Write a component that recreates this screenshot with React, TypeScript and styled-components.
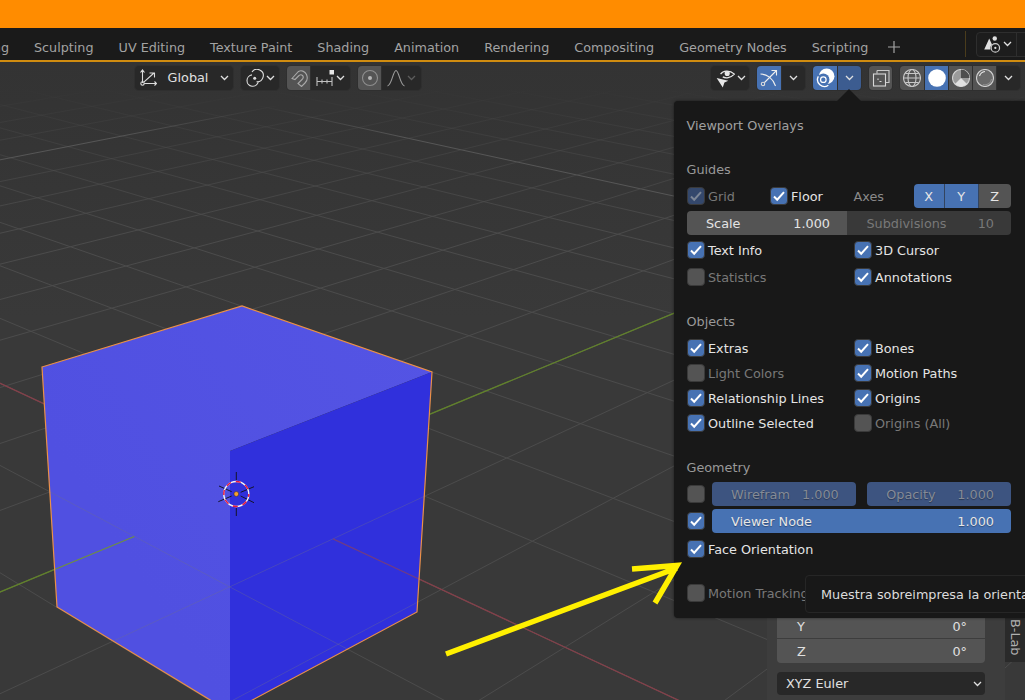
import styled, { createGlobalStyle } from 'styled-components'

const GlobalStyle = createGlobalStyle`
  html, body { margin: 0; padding: 0; background: #393939; }
  body { font-family: "DejaVu Sans", "Liberation Sans", sans-serif; font-size: 12.8px; }
`

const Page = styled.div`
  width: 1025px;
  height: 700px;
  overflow: hidden;
  display: flex;
  flex-direction: column;
`

const OrangeBar = styled.div`
  height: 28px;
  flex: none;
  background: #ff8c00;
`

const TopBar = styled.div`
  height: 32px;
  flex: none;
  display: flex;
  align-items: center;
  background: #1a1a1a;
  border-bottom: 2px solid #d08c10;
  position: relative;
`

const Tabs = styled.div`
  display: flex;
  align-items: center;
  gap: 25px;
  margin-left: -49px;
  white-space: nowrap;
  padding-top: 6px;
`

const Tab = styled.span`
  color: #a3a3a3;
  font-size: 12.75px;
`

const PlusSign = styled.svg`
  width: 12px;
  height: 12px;
  margin-left: -5px;
  color: #a3a3a3;
`

const ScreenSep = styled.div`
  width: 1px;
  height: 26px;
  margin-left: auto;
  background: #4a3c1c;
`

const SceneButton = styled.div`
  width: 60px;
  height: 25px;
  box-sizing: border-box;
  margin: 0 -11px 0 10px;
  display: flex;
  align-items: center;
  background: #1d1d1d;
  border: 1px solid #2e2e2e;
  border-radius: 4px;
  color: #d0d0d0;
`

const SceneLeft = styled.div`
  width: 39px;
  height: 100%;
  display: flex;
  align-items: center;
  justify-content: center;
  gap: 1px;
  border-right: 1px solid #2e2e2e;
`

const Viewport = styled.div`
  flex: 1;
  position: relative;
  background: linear-gradient(#333333 0, #393939 40%);
`

const SceneSvg = styled.svg`
  position: absolute;
  inset: 0;
  display: block;
`

const ArrowSvg = styled(SceneSvg)`
  pointer-events: none;
`

const ToolHeader = styled.div`
  position: absolute;
  top: 4px;
  left: 0;
  right: 0;
  height: 24px;
  display: flex;
  padding: 0 5px 0 135px;
  box-sizing: border-box;
`

const ToolGroup = styled.div<{ $right?: boolean }>`
  display: flex;
  gap: 8px;
  margin-left: ${p => (p.$right ? 'auto' : '0')};
`

const ButtonSet = styled.div`
  display: flex;
  border-radius: 4px;
  overflow: hidden;
  box-shadow: 0 0 0 1px #2f2f2f;
`

const ToolButton = styled.div<{ $w: number; $tone?: 'dark' | 'grey' | 'blue' | 'deep' }>`
  width: ${p => p.$w}px;
  height: 24px;
  box-sizing: border-box;
  display: flex;
  align-items: center;
  justify-content: center;
  gap: 2px;
  color: #dcdcdc;
  background: ${p =>
    p.$tone === 'grey' ? '#545454' : p.$tone === 'blue' ? '#4772b3' : p.$tone === 'deep' ? '#3c5c90' : '#282828'};
  & + & {
    border-left: 1px solid #303030;
  }
`

const GlobalLabel = styled.span`
  color: #e0e0e0;
  margin: 0 10px 0 9px;
  padding-bottom: 2px;
`

const Popover = styled.div`
  position: absolute;
  left: 674px;
  top: 39px;
  right: 0;
  height: 517px;
  box-sizing: border-box;
  padding: 13px 14px 0 12.5px;
  background: #181818;
  border-radius: 4px 0 0 4px;
  box-shadow: 0 0 3px rgba(0, 0, 0, 0.5);
  &::before {
    content: '';
    position: absolute;
    left: 163px;
    top: -12px;
    border-left: 12.5px solid transparent;
    border-right: 12.5px solid transparent;
    border-bottom: 12.5px solid #181818;
  }
`

const PopTitle = styled.div`
  height: 24px;
  line-height: 24px;
  color: #a0a0a0;
  margin-bottom: 20px;
`

const Heading = styled.div<{ $gap?: number; $after: number }>`
  height: 24px;
  line-height: 24px;
  color: #999999;
  margin-top: ${p => p.$gap ?? 0}px;
  margin-bottom: ${p => p.$after}px;
`

const FloorRow = styled.div`
  display: grid;
  grid-template-columns: 83px 84px 60px 1fr;
  height: 24px;
  align-items: center;
  margin-bottom: 3px;
`

const TwoCols = styled.div<{ $rowH: number }>`
  display: grid;
  grid-template-columns: 167px 1fr;
  grid-auto-rows: ${p => p.$rowH}px;
  row-gap: 3px;
  align-items: center;
`

const Item = styled.div<{ $dim?: boolean }>`
  display: flex;
  align-items: center;
  gap: 3.5px;
  white-space: nowrap;
  color: ${p => (p.$dim ? '#787878' : '#e4e4e4')};
`

const Box = styled.div<{ $on?: boolean; $dim?: boolean }>`
  width: 18px;
  height: 18px;
  flex: none;
  box-sizing: border-box;
  border-radius: 4px;
  border: 1px solid #3a3a3a;
  background: ${p => (p.$on ? (p.$dim ? '#34486c' : '#4772b3') : '#545454')};
  color: ${p => (p.$dim ? '#7d8797' : '#ffffff')};
  display: flex;
  align-items: center;
  justify-content: center;
`

const AxesLabel = styled.span`
  color: #8a8a8a;
`

const AxisSet = styled.div`
  display: flex;
  height: 24px;
  border-radius: 4px;
  overflow: hidden;
`

const AxisButton = styled.div<{ $on?: boolean; $w: number }>`
  width: ${p => p.$w}px;
  display: flex;
  align-items: center;
  justify-content: center;
  color: #e6e6e6;
  background: ${p => (p.$on ? '#4772b3' : '#545454')};
  & + & {
    border-left: 1px solid #33445f;
  }
`

const SplitField = styled.div`
  display: grid;
  grid-template-columns: 160.5px 1fr;
  height: 24px;
  border-radius: 4px;
  overflow: hidden;
  margin-bottom: 3px;
`

const FieldPart = styled.div<{ $off?: boolean }>`
  display: flex;
  justify-content: space-between;
  align-items: center;
  padding: 0 17px 0 19.5px;
  color: ${p => (p.$off ? '#787878' : '#e4e4e4')};
  background: ${p => (p.$off ? '#393939' : '#545454')};
`

const GeoRow = styled.div`
  display: flex;
  align-items: center;
  gap: 7px;
  height: 25px;
  margin-bottom: 2px;
`

const SliderPair = styled.div`
  flex: 1;
  display: flex;
  gap: 11px;
`

const Slider = styled.div<{ $off?: boolean }>`
  flex: 1;
  height: 24px;
  box-sizing: border-box;
  display: flex;
  justify-content: space-between;
  align-items: center;
  padding: 1px 17px 0 19.5px;
  border-radius: 4px;
  white-space: nowrap;
  color: ${p => (p.$off ? '#858b96' : '#e6e6e6')};
  background: ${p => (p.$off ? '#3d5480' : '#4772b3')};
  text-shadow: 0 1px 1px rgba(0, 0, 0, 0.35);
`

const SingleRow = styled.div<{ $gap?: number }>`
  height: 24px;
  display: flex;
  align-items: center;
  margin-top: ${p => p.$gap ?? 0}px;
`

const Tooltip = styled.div`
  position: absolute;
  left: 805px;
  top: 513px;
  right: -10px;
  height: 38px;
  box-sizing: border-box;
  padding-left: 15px;
  display: flex;
  align-items: center;
  white-space: nowrap;
  color: #dcdcdc;
  background: #181818;
  border: 1px solid #262626;
  border-radius: 4px;
`

const SidePanel = styled.div`
  position: absolute;
  left: 767px;
  width: 238px;
  bottom: 0;
  top: 500px;
  box-sizing: border-box;
  padding: 0 20px 5px 10px;
  display: flex;
  flex-direction: column;
  justify-content: flex-end;
  background: #3d3d3d;
`

const VectorRow = styled.div<{ $last?: boolean }>`
  height: 24px;
  flex: none;
  display: flex;
  justify-content: space-between;
  align-items: center;
  padding: 0 18px 0 20px;
  color: #e0e0e0;
  background: #545454;
  margin-bottom: ${p => (p.$last ? '9px' : '1px')};
  border-radius: ${p => (p.$last ? '0 0 4px 4px' : '0')};
`

const EulerSelect = styled.div`
  height: 23px;
  flex: none;
  display: flex;
  justify-content: space-between;
  align-items: center;
  padding: 0 3px 0 9px;
  color: #e0e0e0;
  background: #282828;
  border-radius: 4px;
`

const SideTab = styled.div`
  position: absolute;
  left: 1005px;
  right: 0;
  bottom: 38px;
  height: 130px;
  box-sizing: border-box;
  padding-bottom: 7px;
  display: flex;
  justify-content: center;
  align-items: flex-end;
  background: #2a2a2a;
`

const SideTabText = styled.span`
  writing-mode: vertical-rl;
  color: #b0b0b0;
`

// ground plane projection, two vanishing points measured off the picture
const A = -0.0575
const B = -0.0557
const project = (x: number, y: number) => {
  const d = 1 + x * A + y * B
  return [(237 + x * A * -1336 + y * B * 1977) / d, (494 + x * A * -241 + y * B * -226) / d]
}
const xLine = (y: number, from: number) => {
  const to = (0.85 + y * B) / -A
  const p = project(from, y)
  const q = project(to, y)
  return { x1: p[0], y1: p[1], x2: q[0], y2: q[1] }
}
const yLine = (x: number, from: number) => {
  const to = (0.85 + x * A) / -B
  const p = project(x, from)
  const q = project(x, to)
  return { x1: p[0], y1: p[1], x2: q[0], y2: q[1] }
}

const steps: number[] = []
for (let i = -30; i <= 14; i++) steps.push(i)

const Chevron = ({ dim }: { dim?: boolean }) => (
  <svg width="9" height="6" viewBox="0 0 9 6" fill="none" stroke={dim ? '#5c5c5c' : '#e0e0e0'} strokeWidth="1.3">
    <path d="M1 1l3.5 3.5L8 1" />
  </svg>
)

const Check = () => (
  <svg width="16" height="16" viewBox="0 0 16 16" fill="none" stroke="currentColor" strokeWidth="2">
    <path d="M3 8.5l3.2 3.2L13 4.2" />
  </svg>
)

const Icon = ({ children, size = 18 }: { children: React.ReactNode; size?: number }) => (
  <svg width={size} height={size} viewBox="0 0 18 18" fill="none" stroke="currentColor" strokeWidth="1.1">
    {children}
  </svg>
)

const Check2 = ({ label, on, dim }: { label: string; on?: boolean; dim?: boolean }) => (
  <Item $dim={dim}>
    <Box $on={on} $dim={dim}>
      {on && <Check />}
    </Box>
    {label}
  </Item>
)

const Scene = () => (
  <SceneSvg width="1025" height="638" viewBox="0 62 1025 638">
    <defs>
      <linearGradient id="fade" gradientUnits="userSpaceOnUse" x1="0" y1="88" x2="0" y2="240">
        <stop offset="0" stopColor="#4b4b4b" stopOpacity="0" />
        <stop offset="0.3" stopColor="#4b4b4b" stopOpacity="0.4" />
        <stop offset="1" stopColor="#4b4b4b" stopOpacity="1" />
      </linearGradient>
      <linearGradient id="fadeMajor" gradientUnits="userSpaceOnUse" x1="0" y1="105" x2="0" y2="170">
        <stop offset="0" stopColor="#565656" stopOpacity="0" />
        <stop offset="0.5" stopColor="#565656" stopOpacity="1" />
      </linearGradient>
      <linearGradient id="frontFace" gradientUnits="userSpaceOnUse" x1="420" y1="310" x2="100" y2="520">
        <stop offset="0" stopColor="#5454e4" />
        <stop offset="1" stopColor="#5050e1" />
      </linearGradient>
      <clipPath id="cubeClip">
        <polygon points="42,367 242,306 432,372 417,612 230,712 57,607" />
      </clipPath>
    </defs>
    <g strokeWidth="1">
      {steps.map(k => (
        <line key={`x${k}`} {...xLine(k, -70)} stroke={k % 10 === 0 ? 'url(#fadeMajor)' : 'url(#fade)'} />
      ))}
      {steps.map(k => (
        <line key={`y${k}`} {...yLine(k, -70)} stroke={k % 10 === 0 ? 'url(#fadeMajor)' : 'url(#fade)'} />
      ))}
    </g>
    <line {...xLine(0, -20)} stroke="#84404a" strokeWidth="1.3" />
    <line {...yLine(0, -20)} stroke="#61822a" strokeWidth="1.3" />
    <polygon points="42,367 242,306 432,372 230,451 230,712 57,607" fill="url(#frontFace)" />
    <polygon points="230,451 432,372 417,612 230,712" fill="#3030dc" />
    <g clipPath="url(#cubeClip)" strokeWidth="1">
      {steps.filter(k => k >= -1).map(k => (
        <line key={`ox${k}`} {...xLine(k, k >= 1 ? -1 : 1)} stroke="#70708c" strokeOpacity={k === 0 ? 0 : 0.35} />
      ))}
      {steps.filter(k => k >= -1).map(k => (
        <line key={`oy${k}`} {...yLine(k, k >= 1 ? -1 : 1)} stroke="#70708c" strokeOpacity={k === 0 ? 0 : 0.35} />
      ))}
      <line {...xLine(0, 1)} stroke="#8a4060" strokeOpacity="0.7" strokeWidth="1.2" />
      <line {...yLine(0, 1)} stroke="#6f8f40" strokeWidth="1.2" />
    </g>
    <polygon
      points="42,367 242,306 432,372 417,612 230,712 57,607"
      fill="none"
      stroke="#ea9048"
      strokeWidth="1.2"
    />
    <g stroke="#14142a" strokeWidth="1">
      <path d="M236.3 472v8M236.3 508v8M219 486l12.7 5.7M254 486.7l-13.3 5.6M218.3 501.7l13.4-5.7M254 502.7l-13.3-6.7" />
    </g>
    <circle cx="236.3" cy="494" r="12.5" fill="none" stroke="#f4f4f4" strokeWidth="1.4" />
    <circle
      cx="236.3"
      cy="494"
      r="12.5"
      fill="none"
      stroke="#e8183c"
      strokeWidth="1.4"
      strokeDasharray="5 5"
      strokeDashoffset="2"
    />
    <circle cx="236.3" cy="494" r="2.4" fill="#f59f2e" stroke="#2a2a2a" strokeWidth="0.5" />
  </SceneSvg>
)

const App = () => (
  <Page>
    <GlobalStyle />
    <OrangeBar />
    <TopBar>
      <Tabs>
        {[
          'Modeling',
          'Sculpting',
          'UV Editing',
          'Texture Paint',
          'Shading',
          'Animation',
          'Rendering',
          'Compositing',
          'Geometry Nodes',
          'Scripting',
        ].map(t => (
          <Tab key={t}>{t}</Tab>
        ))}
        <PlusSign viewBox="0 0 12 12" fill="none" stroke="currentColor" strokeWidth="1.2">
          <path d="M6 0v12M0 6h12" />
        </PlusSign>
      </Tabs>
      <ScreenSep />
      <SceneButton>
        <SceneLeft>
          <Icon size={20}>
            <path d="M2 14L6.500 4l2.500 5.500A5 5 0 0 0 7.500 14z" fill="#e0e0e0" stroke="none" />
            <circle cx="11.500" cy="4" r="2" fill="#e0e0e0" stroke="none" />
            <circle cx="12" cy="12.500" r="3.800" />
            <circle cx="12" cy="12.500" r="1" fill="#e0e0e0" stroke="none" />
          </Icon>
          <Chevron />
        </SceneLeft>
      </SceneButton>
    </TopBar>
    <Viewport>
      <Scene />
      <ToolHeader>
        <ToolGroup>
          <ButtonSet>
            <ToolButton $w={98}>
              <Icon>
                <path d="M3.500 14V1M1.500 3.500l2-2.500 2 2.500M5.200 14.500h12.300M15.500 12.500l2 2-2 2M4.800 13.200L15 4M10.500 4H15.500V8.500" />
                <circle cx="3.500" cy="14.500" r="1.700" />
              </Icon>
              <GlobalLabel>Global</GlobalLabel>
              <Chevron />
            </ToolButton>
          </ButtonSet>
          <ButtonSet>
            <ToolButton $w={38}>
              <Icon>
                <path d="M6 3A6.200 6.200 0 1 1 10.500 12.700" />
                <path d="M6 5.900A5.700 5.700 0 1 0 12.200 13" />
                <circle cx="8.700" cy="9.300" r="1.500" fill="currentColor" stroke="none" />
              </Icon>
              <Chevron />
            </ToolButton>
          </ButtonSet>
          <ButtonSet>
            <ToolButton $w={23} $tone="grey">
              <Icon>
                <path
                  d="M2 9.500L8.500 2.500C11 1 15 2 16.500 5.500C18 9 17 12 15 14L11.500 17.500L8 14.500L12 10.500C13.500 9 13.500 7.500 12.500 6.500C11.500 5.500 10 5.500 8.500 7L5 10.500Z"
                  stroke="#a8a8a8"
                />
              </Icon>
            </ToolButton>
            <ToolButton $w={40}>
              <Icon>
                <path d="M1 8v9M16 8v9M1 12.500h15M6 10.500v4M11 10.500v4" stroke="#c0c0c0" />
                <rect x="13.500" y="1" width="4.500" height="4.500" fill="#e6e6e6" stroke="none" />
              </Icon>
              <Chevron />
            </ToolButton>
          </ButtonSet>
          <ButtonSet>
            <ToolButton $w={23} $tone="grey">
              <Icon>
                <circle cx="9" cy="9" r="7.500" stroke="#8e8e8e" />
                <circle cx="9" cy="9" r="2" fill="#b4b4b4" stroke="none" />
              </Icon>
            </ToolButton>
            <ToolButton $w={40}>
              <Icon>
                <path d="M0.500 17C5 16 6 1.500 9 1.500s4 14.500 8.500 15.500" stroke="#9a9a9a" />
              </Icon>
              <Chevron dim />
            </ToolButton>
          </ButtonSet>
        </ToolGroup>
        <ToolGroup $right>
          <ButtonSet>
            <ToolButton $w={38}>
              <Icon size={20}>
                <path d="M1.500 9l10.500 2.500-3.500 1.500-1.500 4.500z" fill="#e6e6e6" stroke="none" />
                <path d="M5 5.500C7 2.500 13 1.500 17.500 5.500 14 9 9.500 9.500 7 8" stroke="#e6e6e6" />
                <circle cx="11" cy="5" r="2.300" fill="#e6e6e6" stroke="none" />
              </Icon>
              <Chevron />
            </ToolButton>
          </ButtonSet>
          <ButtonSet>
            <ToolButton $w={24} $tone="blue">
              <Icon>
                <circle cx="3" cy="15" r="1.700" />
                <path d="M4.500 13.500L16.500 1.500M11.500 1.500H16.500V6.500M0.500 5C7 5 13 9.500 15.500 17" stroke="#eeeeee" />
              </Icon>
            </ToolButton>
            <ToolButton $w={24}>
              <Chevron />
            </ToolButton>
          </ButtonSet>
          <ButtonSet>
            <ToolButton $w={24} $tone="blue">
              <Icon size={20}>
                <circle cx="10.500" cy="7.500" r="7" fill="#ffffff" stroke="none" />
                <circle cx="7.500" cy="10.500" r="5.500" fill="#4772b3" stroke="none" />
                <path d="M3 7.500A6.200 6.200 0 0 0 12 15.500" stroke="#ffffff" strokeWidth="1.200" />
                <circle cx="7.500" cy="10.500" r="2.500" stroke="#ffffff" />
              </Icon>
            </ToolButton>
            <ToolButton $w={24} $tone="deep">
              <Chevron />
            </ToolButton>
          </ButtonSet>
          <ButtonSet>
            <ToolButton $w={23} $tone="grey">
              <Icon>
                <path d="M5 1.500h12v12h-3.500M5 1.500v3" stroke="#c8c8c8" />
                <rect x="1.500" y="5" width="12" height="12" stroke="#d8d8d8" />
                <path d="M6 9.500v1.500M7.500 12.500h2" stroke="#d8d8d8" />
              </Icon>
            </ToolButton>
          </ButtonSet>
          <ButtonSet>
            <ToolButton $w={24} $tone="grey">
              <Icon>
                <circle cx="9" cy="9" r="8.500" stroke="#c8c8c8" />
                <ellipse cx="9" cy="9" rx="4" ry="8.500" stroke="#c8c8c8" />
                <path d="M0.500 9h17M2.500 4.500h13M2.500 13.500h13" stroke="#c8c8c8" />
              </Icon>
            </ToolButton>
            <ToolButton $w={24} $tone="blue">
              <Icon>
                <circle cx="9" cy="9" r="8.800" fill="#ffffff" stroke="none" />
              </Icon>
            </ToolButton>
            <ToolButton $w={24} $tone="grey">
              <Icon>
                <circle cx="9" cy="9" r="8.500" fill="#9a9a9a" stroke="#d0d0d0" />
                <path d="M9 9V0.500a8.500 8.500 0 0 1 8.500 8.500z" fill="#4e4e4e" stroke="none" />
                <path d="M9 9L3 15a8.500 8.500 0 0 0 12 0z" fill="#e0e0e0" stroke="none" />
              </Icon>
            </ToolButton>
            <ToolButton $w={24} $tone="grey">
              <Icon>
                <circle cx="9" cy="9" r="8.500" stroke="#d0d0d0" fill="#6a6a6a" />
                <path d="M3.500 7a6.500 6.500 0 0 1 5.500-4.500" stroke="#e8e8e8" />
                <path d="M7 15.500a6.500 6.500 0 0 0 8.500-5.500" stroke="#8e8e8e" />
              </Icon>
            </ToolButton>
            <ToolButton $w={24}>
              <Chevron />
            </ToolButton>
          </ButtonSet>
        </ToolGroup>
      </ToolHeader>
      <SidePanel>
        <VectorRow>
          <span>Y</span>
          <span>0°</span>
        </VectorRow>
        <VectorRow $last>
          <span>Z</span>
          <span>0°</span>
        </VectorRow>
        <EulerSelect>
          XYZ Euler
          <Chevron />
        </EulerSelect>
      </SidePanel>
      <SideTab>
        <SideTabText>B-Lab</SideTabText>
      </SideTab>
      <Popover>
        <PopTitle>Viewport Overlays</PopTitle>
        <Heading $after={2}>Guides</Heading>
        <FloorRow>
          <Check2 label="Grid" on dim />
          <Check2 label="Floor" on />
          <AxesLabel>Axes</AxesLabel>
          <AxisSet>
            <AxisButton $on $w={31}>
              X
            </AxisButton>
            <AxisButton $on $w={33}>
              Y
            </AxisButton>
            <AxisButton $w={33}>Z</AxisButton>
          </AxisSet>
        </FloorRow>
        <SplitField>
          <FieldPart>
            <span>Scale</span>
            <span>1.000</span>
          </FieldPart>
          <FieldPart $off>
            <span>Subdivisions</span>
            <span>10</span>
          </FieldPart>
        </SplitField>
        <TwoCols $rowH={24}>
          <Check2 label="Text Info" on />
          <Check2 label="3D Cursor" on />
          <Check2 label="Statistics" dim />
          <Check2 label="Annotations" on />
        </TwoCols>
        <Heading $gap={21} $after={3}>
          Objects
        </Heading>
        <TwoCols $rowH={22}>
          <Check2 label="Extras" on />
          <Check2 label="Bones" on />
          <Check2 label="Light Colors" dim />
          <Check2 label="Motion Paths" on />
          <Check2 label="Relationship Lines" on />
          <Check2 label="Origins" on />
          <Check2 label="Outline Selected" on />
          <Check2 label="Origins (All)" dim />
        </TwoCols>
        <Heading $gap={22} $after={1}>
          Geometry
        </Heading>
        <GeoRow>
          <Box />
          <SliderPair>
            <Slider $off>
              <span>Wirefram</span>
              <span>1.000</span>
            </Slider>
            <Slider $off>
              <span>Opacity</span>
              <span>1.000</span>
            </Slider>
          </SliderPair>
        </GeoRow>
        <GeoRow>
          <Box $on>
            <Check />
          </Box>
          <SliderPair>
            <Slider>
              <span>Viewer Node</span>
              <span>1.000</span>
            </Slider>
          </SliderPair>
        </GeoRow>
        <SingleRow $gap={4}>
          <Check2 label="Face Orientation" on />
        </SingleRow>
        <SingleRow $gap={20}>
          <Check2 label="Motion Tracking" dim />
        </SingleRow>
      </Popover>
      <Tooltip>Muestra sobreimpresa la orienta</Tooltip>
      <ArrowSvg width="1025" height="638" viewBox="0 62 1025 638">
        <path
          d="M446 654L677 568M632 569L677 565.500L655 603"
          fill="none"
          stroke="#fff000"
          strokeWidth="5.500"
        />
      </ArrowSvg>
    </Viewport>
  </Page>
)

export default App
